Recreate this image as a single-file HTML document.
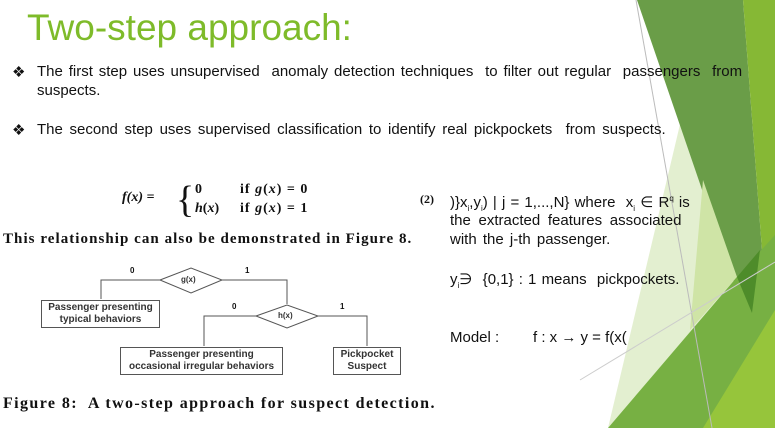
<!DOCTYPE html>
<html><head><meta charset="utf-8"><style>
body{margin:0;width:775px;height:428px;overflow:hidden;background:#fff;position:relative;font-family:"Liberation Sans",sans-serif;color:#111}
.a{position:absolute;white-space:nowrap}
.t{font-size:15px}
.s{font-family:"Liberation Serif",serif;font-weight:bold}
.b{position:absolute;border:1px solid #555;font-size:9.5px;text-align:center;line-height:12px;font-weight:bold;color:#333;box-sizing:border-box;display:flex;flex-direction:column;justify-content:center}
</style></head><body>
<svg class="a" style="left:0;top:0" width="775" height="428">
<polygon points="700,40 740,277 608,428" fill="#e3efd0"/>
<polygon points="637,0 743,0 762,250 745,315" fill="#6a9d48"/>
<polygon points="743,0 775,0 775,428 752,428 762,250" fill="#86b835"/>
<polygon points="703,180 737,277 690,330" fill="#cfe4a6"/>
<polygon points="737,277 775,235 775,428 608,428" fill="#77b043"/>
<polygon points="737,277 760,250 752,313" fill="#4e8c2a"/>
<polygon points="703,428 775,310 775,428" fill="#96c53b"/>
<line x1="636" y1="0" x2="712" y2="428" stroke="#bbb" stroke-width="1"/>
<line x1="580" y1="380" x2="775" y2="262" stroke="#ccc" stroke-width="1"/>
<g stroke="#555" fill="none" stroke-width="1">
<polygon points="160,280 191,268 222,280 191,293" fill="#fff"/>
<polyline points="160,280 101,280 101,299"/>
<polyline points="222,280 287,280 287,304"/>
<polygon points="256,316 287,305 318,316 287,328" fill="#fff"/>
<polyline points="256,316 204,316 204,346"/>
<polyline points="318,316 367,316 367,346"/>
</g>
</svg>
<div class="a" style="left:27px;top:7px;font-size:37px;color:#7ebb2a">Two-step approach:</div>
<div class="a t" style="left:12px;top:63px">❖</div>
<div class="a t" style="left:37px;top:63px;word-spacing:1.7px">The first step uses unsupervised&nbsp; anomaly detection techniques&nbsp; to filter out regular&nbsp; passengers&nbsp; from</div>
<div class="a t" style="left:37px;top:82px">suspects.</div>
<div class="a t" style="left:12px;top:121px">❖</div>
<div class="a t" style="left:37px;top:121px;word-spacing:2.5px">The second step uses supervised classification to identify real pickpockets&nbsp; from suspects.</div>
<div class="a s" style="left:122px;top:190px;font-size:14px;font-style:italic;font-weight:bold">f(x) =</div>
<div class="a" style="left:176px;top:178px;font-size:38px;font-family:'Liberation Serif',serif">{</div>
<div class="a s" style="left:195px;top:182px;font-size:14px">0</div>
<div class="a s" style="left:240px;top:182px;font-size:14px;letter-spacing:1px">if <i>g</i>(<i>x</i>) = 0</div>
<div class="a s" style="left:195px;top:201px;font-size:14px"><i>h</i>(<i>x</i>)</div>
<div class="a s" style="left:240px;top:201px;font-size:14px;letter-spacing:1px">if <i>g</i>(<i>x</i>) = 1</div>
<div class="a s" style="left:420px;top:192px;font-size:12px">(2)</div>
<div class="a s" style="left:3px;top:231px;font-size:15px;letter-spacing:1.05px">This relationship can also be demonstrated in Figure 8.</div>
<div class="a" style="left:130px;top:266px;font-size:8px;font-weight:bold">0</div>
<div class="a" style="left:245px;top:266px;font-size:8px;font-weight:bold">1</div>
<div class="a" style="left:181px;top:275px;font-size:8px;font-weight:bold;color:#333">g(x)</div>
<div class="a" style="left:232px;top:302px;font-size:8px;font-weight:bold">0</div>
<div class="a" style="left:340px;top:302px;font-size:8px;font-weight:bold">1</div>
<div class="a" style="left:278px;top:311px;font-size:8px;font-weight:bold;color:#333">h(x)</div>
<div class="b" style="left:41px;top:300px;width:119px;height:28px;font-size:10px">Passenger presenting<br>typical behaviors</div>
<div class="b" style="left:120px;top:347px;width:163px;height:28px;font-size:10px">Passenger presenting<br>occasional irregular behaviors</div>
<div class="b" style="left:333px;top:347px;width:68px;height:28px;font-size:10px">Pickpocket<br>Suspect</div>
<div class="a s" style="left:3px;top:395px;font-size:16px;letter-spacing:1.4px">Figure 8:&nbsp; A two-step approach for suspect detection.</div>
<div class="a t" style="left:450px;top:193px;word-spacing:1px">)}x<sub style="font-size:8px">i</sub>,y<sub style="font-size:8px">i</sub>) | j = 1,...,N} where&nbsp; x<sub style="font-size:8px">i</sub> ∈ R<sup style="font-size:8px">q</sup> is</div>
<div class="a t" style="left:450px;top:212px;word-spacing:3.5px">the extracted features associated</div>
<div class="a t" style="left:450px;top:231px;word-spacing:2px">with the j-th passenger.</div>
<div class="a t" style="left:450px;top:270px;word-spacing:1px">y<sub style="font-size:8px">i</sub>∋&nbsp; {0,1} : 1 means&nbsp; pickpockets.</div>
<div class="a t" style="left:450px;top:329px">Model :</div>
<div class="a t" style="left:533px;top:329px">f : x → y = f(x(</div>
</body></html>
